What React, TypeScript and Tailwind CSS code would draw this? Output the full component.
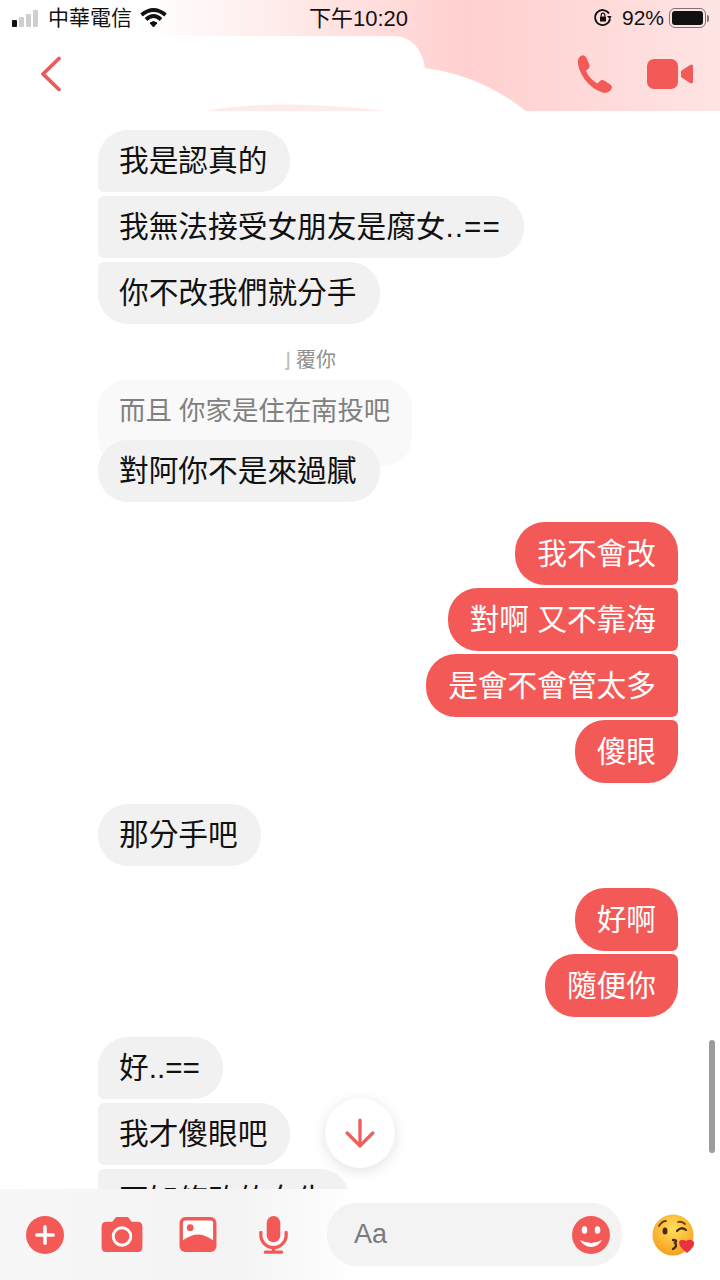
import type { ReactNode } from "react";
import { ArrowDown, Plus } from "lucide-react";

const font = "font-['Liberation_Sans','Noto_Sans_CJK_TC',sans-serif]";

function In({ children, className = "" }: { children: ReactNode; className?: string }) {
  return (
    <div className={`h-[62px] w-fit flex items-center pl-[21px] pr-[23px] pt-[1px] bg-[#f1f1f2] text-[#111] text-[29.7px] whitespace-pre ${className}`}>
      {children}
    </div>
  );
}

function Out({ text, className = "" }: { text: string; className?: string }) {
  return (
    <div className={`h-[63px] w-fit self-end flex items-center pl-[22px] pr-[22px] pt-[1px] rounded-l-[30px] bg-[#f35a57] text-white text-[29.7px] whitespace-pre ${className}`}>
      {text}
    </div>
  );
}

export default function App() {
  return (
    <div className={`relative w-[720px] h-[1280px] overflow-hidden bg-white ${font}`}>
      {/* Header */}
      <header className="absolute top-0 left-0 w-full h-[111px] bg-gradient-to-r from-white from-[20%] via-[#ffd0cf] via-[65%] to-[#fde4e3] overflow-hidden">
        {/* Redacted name */}
        <svg className="absolute top-0 left-0" width="720" height="111" viewBox="0 0 720 111">
          <path d="M84 64 Q92 36 150 36 L395 36 Q420 38 425 68 Q480 75 526 111 L0 111 L0 64 Z" fill="#fff" />
          <path d="M205 111 Q280 98 385 111 Z" fill="#fdecea" />
        </svg>

        <div className="relative flex items-center h-[36px] text-[#111] text-[21px]">
          <div className="flex items-end gap-[2px] ml-[12px] h-[17px]">
            <span className="w-[5px] h-[7px] rounded-[1px] bg-[#111]" />
            <span className="w-[5px] h-[10px] rounded-[1px] bg-[#cfcfcf]" />
            <span className="w-[5px] h-[13px] rounded-[1px] bg-[#cfcfcf]" />
            <span className="w-[5px] h-[17px] rounded-[1px] bg-[#cfcfcf]" />
          </div>
          <span className="ml-[10px] w-[84px] whitespace-nowrap">中華電信</span>
          <svg className="ml-[8px]" width="27" height="20" viewBox="0 0 27 20" fill="none" stroke="#111" strokeWidth="3.800">
            <path d="M1.500 7 Q13.500 -3 25.500 7" />
            <path d="M6 11.500 Q13.500 4.500 21 11.500" />
            <path d="M10 15 L13.500 19 L17 15 Q13.500 12 10 15 Z" fill="#111" strokeWidth="1" />
          </svg>
          <span className="ml-[142px] w-[104px] text-[22px] whitespace-nowrap">下午10:20</span>
          <svg className="ml-[180px]" width="20" height="20" viewBox="0 0 20 20" fill="none" stroke="#111" strokeWidth="1.800">
            <path d="M16 5.500 A7.500 7.500 0 1 0 17 11" />
            <path d="M14 8 L18.500 8 L17 11.500 Z" fill="#111" stroke="none" />
            <rect x="7" y="8.500" width="6" height="5" fill="#111" stroke="none" />
            <path d="M8.200 8.500 V7 A1.800 1.800 0 0 1 11.800 7 V8.500" strokeWidth="1.200" />
          </svg>
          <span className="ml-[9px] w-[42px] whitespace-nowrap">92%</span>
          <div className="ml-[5px] w-[37px] h-[20px] rounded-[6px] border border-[#777] p-[2px]">
            <div className="w-[31px] h-full rounded-[3px] bg-[#111]" />
          </div>
          <span className="ml-[1px] w-[2px] h-[7px] rounded-r-sm bg-[#777]" />
        </div>

        <div className="relative flex items-center h-[75px]">
          <svg className="ml-[40px]" width="22" height="36" viewBox="0 0 22 36" fill="none" stroke="#e85d5a" strokeWidth="3.800" strokeLinecap="round" strokeLinejoin="round">
            <path d="M19 2.500 L3 18 L19 33.500" />
          </svg>
          <svg className="ml-[514px]" width="38" height="40" viewBox="0 0 40 42" fill="#f35a57">
            <path d="M5 2 Q9 0 11 4 L14 11 Q15 14 12.500 16 L10.500 17.500 Q14 26 22.500 31 L25 28.500 Q27 26.500 30 28 L36 32 Q39.500 34.500 36.500 38 Q33 42 28 40.500 Q17 37 9 26.500 Q2 16 2 8 Q2 4 5 2 Z" />
          </svg>
          <svg className="ml-[33px]" width="46" height="30" viewBox="0 0 46 30" fill="#f35a57">
            <rect x="0" y="0" width="31" height="30" rx="7" />
            <path d="M34 12 L43 6 Q46 4.500 46 8 V22 Q46 25.500 43 24 L34 18 Z" />
          </svg>
        </div>
      </header>

      {/* Messages */}
      <main className="flex flex-col pt-[130px] pl-[98px] pr-[42px] h-[1280px]">
        <div className="flex flex-col gap-[4px]">
          <In className="rounded-l-[6px] rounded-tl-[30px] rounded-r-[30px]">我是認真的</In>
          <In className="rounded-l-[6px] rounded-r-[30px]">
            我無法接受女朋友是腐女<span className="tracking-[1px]">..==</span>
          </In>
          <In className="rounded-l-[6px] rounded-bl-[30px] rounded-r-[30px]">你不改我們就分手</In>
        </div>

        <p className="mt-[22px] h-[28px] pl-[185px] flex text-[20px] leading-[28px] text-[#8f8f8f] whitespace-pre">
          <span className="w-[13px] text-[#bbb]">⌋</span>覆你
        </p>

        <div className="relative mt-[6px] h-[121px]">
          <div className="h-[86px] w-[314px] pt-[14px] pl-[21px] rounded-[28px] bg-[#f9f9f9] text-[#808080] text-[26.4px] leading-[34px] whitespace-pre">
            而且 你家是住在南投吧
          </div>
          <In className="absolute left-0 top-[60px] rounded-[30px]">對阿你不是來過膩</In>
        </div>

        <div className="mt-[21px] flex flex-col gap-[3px]">
          <Out text="我不會改" className="rounded-tr-[30px] rounded-br-[6px]" />
          <Out text="對啊 又不靠海" className="rounded-r-[6px]" />
          <Out text="是會不會管太多" className="rounded-r-[6px]" />
          <Out text="傻眼" className="rounded-tr-[6px] rounded-br-[30px]" />
        </div>

        <In className="mt-[21px] rounded-[30px]">那分手吧</In>

        <div className="mt-[22px] flex flex-col gap-[3px]">
          <Out text="好啊" className="rounded-tr-[30px] rounded-br-[6px]" />
          <Out text="隨便你" className="rounded-tr-[6px] rounded-br-[30px]" />
        </div>

        <div className="mt-[20px] flex flex-col gap-[4px]">
          <In className="rounded-l-[6px] rounded-tl-[30px] rounded-r-[30px]">好..==</In>
          <In className="rounded-l-[6px] rounded-r-[30px]">我才傻眼吧</In>
          <In className="rounded-l-[6px] rounded-r-[30px]">不知修改的女生</In>
        </div>
      </main>

      {/* Scrollbar */}
      <div className="absolute left-[709px] top-[1040px] w-[6px] h-[113px] rounded-full bg-[#9c9c9c]" />

      {/* Scroll down */}
      <button className="absolute left-[325px] top-[1098px] w-[70px] h-[70px] rounded-full bg-white shadow-[0_3px_14px_rgba(0,0,0,0.12)] flex items-center justify-center">
        <ArrowDown size={44} strokeWidth={1.8} color="#ec5f5c" />
      </button>

      {/* Composer */}
      <footer className="absolute left-0 bottom-0 w-full h-[91px] bg-gradient-to-r from-[#f7f7f7] via-[#f3f3f4] via-[32%] to-white to-[50%] flex items-center">
        <span className="ml-[26px] w-[38px] h-[38px] rounded-full bg-[#f35a57] flex items-center justify-center">
          <Plus size={28} strokeWidth={3} color="#fff" />
        </span>
        <svg className="ml-[37px]" width="42" height="35" viewBox="0 0 42 36" fill="#f35a57">
          <path d="M5 5 H11 L14 1 Q14.500 0 16 0 H26 Q27.500 0 28 1 L31 5 H37 Q42 5 42 10 V31 Q42 36 37 36 H5 Q0 36 0 31 V10 Q0 5 5 5 Z" />
          <circle cx="21" cy="20" r="9" fill="none" stroke="#fff" strokeWidth="3" />
        </svg>
        <svg className="ml-[36px]" width="38" height="35" viewBox="0 0 38 36">
          <rect width="38" height="36" rx="6" fill="#f35a57" />
          <path d="M3.500 24 V6 Q3.500 3.500 6 3.500 H32 Q34.500 3.500 34.500 6 V24 Q26 18 19 18 Q12 18 3.500 24 Z" fill="#fff" />
          <circle cx="11" cy="11" r="3.500" fill="#f35a57" />
        </svg>
        <svg className="ml-[41px]" width="31" height="38" viewBox="0 0 32 42" fill="none" stroke="#f35a57" strokeWidth="3.600" strokeLinecap="round">
          <rect x="8.500" y="0" width="15" height="29" rx="7.500" fill="#f35a57" stroke="none" />
          <path d="M2 18 V21 A14 14 0 0 0 30 21 V18" />
          <path d="M16 35 V40 M7 40 H25" strokeWidth="3.600" />
        </svg>
        <div className="ml-[38px] w-[295px] h-[63px] rounded-[30px] bg-[#f3f3f4] flex items-center pl-[27px] pr-[12px] justify-between">
          <span className="text-[27px] text-[#7b7b7b]">Aa</span>
          <svg width="38" height="38" viewBox="0 0 38 38">
            <circle cx="19" cy="19" r="19" fill="#f35a57" />
            <ellipse cx="12.500" cy="14" rx="2.800" ry="3.800" fill="#fff" />
            <ellipse cx="25.500" cy="14" rx="2.800" ry="3.800" fill="#fff" />
            <path d="M8 24 Q19 30 30 24 Q26 31 19 31 Q12 31 8 24 Z" fill="#fff" />
          </svg>
        </div>
        <svg className="ml-[30px]" width="44" height="42" viewBox="0 0 44 42">
          <defs>
            <radialGradient id="face" cx="50%" cy="35%" r="65%">
              <stop offset="0%" stopColor="#ffdf5c" />
              <stop offset="100%" stopColor="#f5a01e" />
            </radialGradient>
          </defs>
          <circle cx="21" cy="21" r="20.500" fill="url(#face)" />
          <path d="M7 12 Q10 7 14 7 M26 8 Q30 7 33 10" fill="none" stroke="#6b3b12" strokeWidth="1.800" strokeLinecap="round" />
          <ellipse cx="13" cy="17" rx="2.500" ry="3.500" fill="#4a2a10" />
          <path d="M25 17 Q29 12 34 16" fill="none" stroke="#4a2a10" strokeWidth="2.200" strokeLinecap="round" />
          <path d="M21 26 Q26 26 23 29 Q26 32 21 35" fill="none" stroke="#4a2a10" strokeWidth="2.400" strokeLinecap="round" />
          <path d="M35 39 Q27 33 27 28 Q29 24 34 27 Q39 24 42 28 Q43 33 35 39 Z" fill="#e8323c" />
        </svg>
      </footer>
    </div>
  );
}
